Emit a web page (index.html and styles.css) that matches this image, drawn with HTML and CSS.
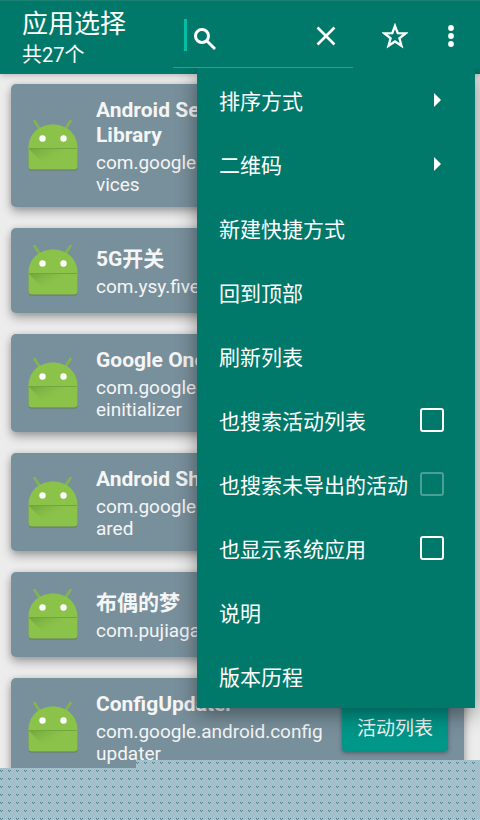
FILE: index.html
```html
<!DOCTYPE html>
<html lang="zh-CN">
<head>
<meta charset="utf-8">
<meta name="viewport" content="width=device-width, initial-scale=1">
<title>应用选择</title>
<link rel="stylesheet" href="styles.css">
</head>
<body>
<svg class="defs" aria-hidden="true">
  <defs>
    <linearGradient id="fold" x1="0" y1="0" x2="1" y2="1">
      <stop offset="0" stop-color="#5f9136" stop-opacity=".6"/>
      <stop offset=".6" stop-color="#7cb342" stop-opacity="0"/>
    </linearGradient>
  </defs>
  <symbol id="robot" viewBox="0 0 52 54">
    <path d="M7.500 3l6 9M43.500 3l-6 9" stroke="#82b54b" stroke-width="2.600" stroke-linecap="round"/>
    <path d="M1.500 32v17.500a3 3 0 0 0 3 3h43a3 3 0 0 0 3-3V32z" fill="#50683c" opacity=".55"/>
    <path d="M1.500 30C1.500 16 12 6.500 26 6.500S50.500 16 50.500 30v18.500a3 3 0 0 1-3 3h-43a3 3 0 0 1-3-3z" fill="#8bc34a"/>
    <path d="M2 31h38L22 51.500z" fill="url(#fold)"/>
    <path d="M1.500 30.500h49" stroke="#73a53e" stroke-width="1"/>
    <circle cx="15.500" cy="20.500" r="3.200" fill="#fff"/>
    <circle cx="36.500" cy="20.500" r="3.200" fill="#fff"/>
  </symbol>
</svg>
<div class="screen">
  <header class="bar">
    <div class="heading">
      <h1>应用选择</h1>
      <p>共27个</p>
    </div>
    <div class="search">
      <span class="caret"></span>
      <svg class="glass" viewBox="0 0 24 24" aria-hidden="true"><circle cx="9" cy="9" r="6.500"/><path d="M14 14l8 8"/></svg>
      <input type="search" aria-label="搜索">
      <button class="icon" aria-label="清除"><svg viewBox="0 0 24 24"><path d="M3.500 3.500l17 17M20.500 3.500l-17 17"/></svg></button>
    </div>
    <button class="icon star" aria-label="收藏"><svg viewBox="0 0 26 26"><path d="M13 2.800l2.700 7.300 7.900.3-6.200 4.900 2.100 7.500-6.500-4.300-6.500 4.300 2.100-7.500-6.200-4.900 7.900-.3z"/></svg></button>
    <button class="icon more" aria-label="更多"><svg viewBox="0 0 8 24"><circle cx="4" cy="4" r="2.900"/><circle cx="4" cy="12" r="2.900"/><circle cx="4" cy="20" r="2.900"/></svg></button>
  </header>

  <main class="list">
    <article class="card"><svg class="robot"><use href="#robot"/></svg><div class="info"><h2>Android Services<br>Library</h2><p>com.google.android.ext.ser<br>vices</p></div></article>
    <article class="card"><svg class="robot"><use href="#robot"/></svg><div class="info"><h2>5G开关</h2><p>com.ysy.fivegswitch</p></div></article>
    <article class="card"><svg class="robot"><use href="#robot"/></svg><div class="info"><h2>Google One Time Init</h2><p>com.google.android.onetim<br>einitializer</p></div></article>
    <article class="card"><svg class="robot"><use href="#robot"/></svg><div class="info"><h2>Android Shared</h2><p>com.google.android.ext.sh<br>ared</p></div></article>
    <article class="card"><svg class="robot"><use href="#robot"/></svg><div class="info"><h2>布偶的梦</h2><p>com.pujiagames.rag</p></div></article>
    <article class="card"><svg class="robot"><use href="#robot"/></svg><div class="info"><h2>ConfigUpdater</h2><p>com.google.android.config<br>updater</p></div><button class="open">活动列表</button></article>
  </main>

  <footer class="mesh"></footer>

  <nav class="menu">
    <button class="item">排序方式<span class="arrow"></span></button>
    <button class="item">二维码<span class="arrow"></span></button>
    <button class="item">新建快捷方式</button>
    <button class="item">回到顶部</button>
    <button class="item">刷新列表</button>
    <label class="item">也搜索活动列表<input type="checkbox"></label>
    <label class="item">也搜索未导出的活动<input type="checkbox" disabled></label>
    <label class="item">也显示系统应用<input type="checkbox"></label>
    <button class="item">说明</button>
    <button class="item">版本历程</button>
  </nav>
</div>
</body>
</html>
```
FILE: styles.css
```css
* { box-sizing: border-box; }

body {
  margin: 0;
  background: #ececec;
  font-family: Roboto, "Noto Sans CJK SC", sans-serif;
  color: #fff;
}

h1, h2, p { margin: 0; }

button, input {
  font: inherit;
  color: inherit;
  border: 0;
  background: none;
  padding: 0;
  margin: 0;
}

.defs { position: absolute; width: 0; height: 0; }

.screen {
  position: relative;
  display: grid;
  grid-template-columns: minmax(0, 1fr);
  grid-template-rows: auto minmax(0, 1fr) auto;
  height: 100vh;
  overflow: hidden;
}

/* Top bar */
.bar {
  display: flex;
  align-items: center;
  height: 74px;
  padding: 0 25px 0 22px;
  background: #00796b;
  border-top: 1px solid #1c8073;
  box-shadow: 0 1px 6px rgba(0, 0, 0, .25);
  z-index: 1;
}

.heading { width: 151px; }
.heading h1 { font-size: 26px; line-height: 34px; font-weight: 400; }
.heading p { font-size: 20px; line-height: 28px; }

.search {
  flex: 1;
  min-width: 0;
  display: flex;
  align-items: center;
  height: 60px;
  padding: 0 15px 0 11px;
  border-bottom: 1px solid #3d978a;
}

.caret { width: 3px; height: 32px; margin-bottom: 4px; background: #00bfa5; }
.glass { width: 24px; height: 24px; margin: 3px 0 0 6px; fill: none; stroke: #fff; stroke-width: 3; }
.search input { flex: 1; min-width: 0; height: 40px; outline: 0; }

.icon { display: flex; margin-bottom: 3px; }
.icon svg { width: 24px; height: 24px; fill: none; stroke: #fff; stroke-width: 2.6; }
.star { margin-left: 29px; margin-right: 39px; }
.star svg { width: 26px; height: 26px; stroke-width: 2.3; }
.more svg { width: 8px; fill: #fff; stroke: none; }

/* App list */
.list {
  display: flex;
  flex-direction: column;
  gap: 21px;
  padding: 10px 16px 0 11px;
  overflow: hidden;
}

.card {
  flex: none;
  display: flex;
  align-items: center;
  min-height: 85px;
  padding: 12px 16px 11px;
  border-radius: 5px;
  background: #78909c;
  box-shadow: 0 5px 10px rgba(0, 0, 0, .3), 0 0 6px rgba(0, 0, 0, .12);
  color: #f5f5f5;
}

.robot { flex: none; width: 52px; height: 54px; margin-bottom: 2px; }

.info { flex: 1; min-width: 0; margin-left: 17px; padding-top: 2px; white-space: nowrap; }
.info h2 { font-size: 21px; line-height: 25px; margin-bottom: 4px; font-weight: 700; }
.info p { font-size: 19px; line-height: 22px; }

.open {
  width: 106px;
  height: 48px;
  margin-bottom: 2px;
  border-radius: 3px;
  background: #009688;
  box-shadow: 0 2px 4px rgba(0, 0, 0, .35);
  font-size: 19px;
}

/* Dotted strip along the bottom edge */
.mesh {
  position: relative;
  z-index: 1;
  height: 52px;
}

.mesh, .mesh::before {
  background-image:
    conic-gradient(from 270deg at 1px 1px, #3f788b 25%, transparent 0),
    conic-gradient(from 270deg at 1px 1px, #5a8c9c 25%, transparent 0),
    conic-gradient(from 270deg at 1px 1px, #5a8c9c 25%, transparent 0),
    conic-gradient(#98bfca 25%, #a8c3cd 0 50%, #98bfca 0 75%, #a8c3cd 0);
  background-size: 8px 8px, 8px 8px, 8px 8px, 2px 2px;
  background-position: 0 2px, 2px 2px, 1px 3px, 0 0;
}

.mesh::before {
  content: "";
  position: absolute;
  left: 136px;
  right: 0;
  bottom: 100%;
  height: 8px;
}

/* Overflow menu */
.menu {
  position: absolute;
  z-index: 2;
  top: 68px;
  right: 5px;
  width: 278px;
  background: #00796b;
  box-shadow: 0 6px 20px rgba(0, 0, 0, .42);
  clip-path: inset(0 -30px -40px -30px);
}

.item {
  display: flex;
  align-items: center;
  justify-content: space-between;
  width: 100%;
  height: 64px;
  padding: 0 31px 0 22px;
  font-size: 21px;
  white-space: nowrap;
}

.arrow {
  margin-right: 3px;
  border: 7px solid transparent;
  border-left: 7px solid #fff;
  border-right: 0;
}

.item input {
  appearance: none;
  flex: none;
  width: 24px;
  height: 24px;
  border: 2px solid #fff;
  border-radius: 3px;
}

.item input:disabled { border-color: #4b9f94; }
```
